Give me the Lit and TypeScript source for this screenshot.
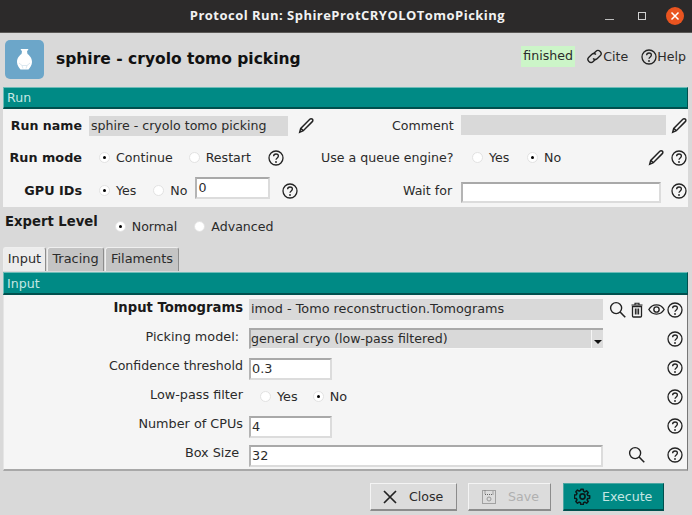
import { LitElement, html, css, svg } from "lit";
import { customElement } from "lit/decorators.js";

const ic = (w: number, body: unknown, vb = "0 0 16 16") =>
  html`<svg class="ic" width=${w} height=${w} viewBox=${vb} fill="none" stroke="#222" stroke-width="1.3">${body}</svg>`;

const help = () => ic(16, svg`<circle cx="8" cy="8" r="7"/><path d="M5.6 6.2C5.7 4.7 6.8 4 8 4c1.4 0 2.4.9 2.4 2.1 0 1.8-2.4 1.8-2.4 3.7"/><circle cx="8" cy="12" r=".9" fill="#222" stroke="none"/>`);
const pencil = () => ic(18, svg`<path d="M2.4 13.6l.9-3.5L11.4 2c.7-.7 1.6-.7 2.2-.1.7.7.6 1.6 0 2.2l-8 8.1z"/><path d="M3.3 10.1l2.4 2.1"/>`);
const search = () => ic(17, svg`<circle cx="6.7" cy="6.7" r="5.2"/><path d="M10.4 10.4l4.9 4.9" stroke-width="1.5"/>`);
const trash = () => ic(16, svg`<path d="M3.5 4.5h9V14a1 1 0 0 1-1 1h-7a1 1 0 0 1-1-1z"/><path d="M2.5 3h11M6 3V1.3h4V3M6.4 6.5v6M8 6.5v6M9.6 6.5v6" stroke-width="1.1"/>`);
const eye = () => ic(17, svg`<path d="M.8 8C2.6 5 5 3.7 8 3.7S13.4 5 15.2 8c-1.8 3-4.2 4.3-7.2 4.3S2.6 11 .8 8z"/><circle cx="8" cy="8" r="2.5"/>`);
const link = () => ic(17, svg`<path d="M7 5.4l2.2-2.2a3 3 0 0 1 4.1 0 3 3 0 0 1 0 4.2l-2.6 2.5a3 3 0 0 1-4.1 0"/><path d="M9 10.6l-2.2 2.2a3 3 0 0 1-4.1 0 3 3 0 0 1 0-4.2l2.6-2.5a3 3 0 0 1 4.1 0"/>`);
const gear = () => ic(17, svg`<circle cx="8" cy="8" r="2.4" stroke="#0a1a1a" stroke-width="1.6"/><path stroke="#0a1a1a" stroke-width="1.6" stroke-linejoin="round" d="M6.8 1.2h2.4l.4 2 1.3.6 1.8-1.1 1.6 1.7-1.1 1.7.6 1.3 2 .4v2.4l-2 .4-.6 1.3 1.1 1.7-1.6 1.7-1.8-1.1-1.3.6-.4 2H6.8l-.4-2-1.3-.6-1.8 1.1-1.6-1.7 1.1-1.7-.6-1.3-2-.4V7l2-.4.6-1.3-1.1-1.7 1.6-1.7 1.8 1.1 1.3-.6z" transform="translate(.2 .2) scale(.92)"/>`);
const close = () => ic(16, svg`<path d="M2 2l12 12M14 2L2 14" stroke-width="1.7"/>`);
const floppy = () => html`<svg class="ic" width="16" height="16" viewBox="0 0 16 16" fill="none" stroke="#666" stroke-width="1" stroke-dasharray="1 1"><path d="M1.5 1.5h13v13h-13z"/><path d="M4 1.5v4h8v-4" /><circle cx="8" cy="10" r="2" stroke-dasharray="none" stroke="#999"/></svg>`;
const radio = (on: boolean) => html`<span class="radio ${on ? "on" : ""}"></span>`;

@customElement("app-root")
export class AppRoot extends LitElement {
  static styles = css`
    :host { display: block; width: 692px; height: 515px; overflow: hidden; background: #d9d9d9; font-family: "DejaVu Sans", sans-serif; font-size: 12.6px; color: #2b2b2b; }
    * { box-sizing: border-box; }
    .ic { display: block; flex: none; }
    .titlebar { height: 33px; background: #2c2a2a; border-bottom: 1px solid #5a5856; display: flex; align-items: center; justify-content: center; position: relative; color: #f2f2f2; font: bold 13px "Open Sans", sans-serif; letter-spacing: .47px; padding: 0 0 2px 3px; }
    .winbtns { position: absolute; top: 0; right: 0; height: 32px; display: flex; align-items: center; }
    .min { width: 9px; height: 1.5px; background: #bdbdbd; margin: 7px 0 0 0; }
    .max { width: 8px; height: 8px; border: 1px solid #d0d0d0; margin: 0 0 0 24px; }
    .x { width: 18px; height: 18px; border-radius: 50%; background: #e95420; margin: 0 8px 0 20px; display: flex; align-items: center; justify-content: center; }

    .header { height: 54px; display: flex; align-items: center; padding: 0 6px 0 5px; }
    .logo { width: 39px; height: 39px; background: #6ca6c9; border-radius: 5px; display: flex; align-items: center; justify-content: center; margin-bottom: 2px; }
    .h-title { font-size: 15.5px; font-weight: bold; color: #111; margin-left: 12px; margin-bottom: 2px; }
    .h-right { margin-left: auto; display: flex; align-items: center; margin-bottom: 7px; }
    .finished { background: #ccf5c8; height: 21px; line-height: 20px; padding: 0 2px; margin-right: 11px; width: 54px; white-space: nowrap; }
    .h-link { display: flex; align-items: center; }
    .h-link + .h-link { margin-left: 13px; }

    .bar { background: #008a85; color: #c5e6e3; height: 22px; line-height: 20px; padding-left: 3px; border-top: 1px solid #6dbcb8; border-left: 1px solid #6dbcb8; border-bottom: 2px solid #00504e; border-right: 1px solid #00504e; }
    .bar.input { height: 23px; margin-top: 1px; line-height: 21px; }
    .section { margin: 0 4px 0 3px; }
    .run-panel { background: #f5f5f5; height: 98px; display: grid; grid-template-rows: 31px 33px 33px; padding-top: 1px; }
    .row { display: flex; align-items: center; position: relative; white-space: nowrap; }
    .lbl { width: 79px; text-align: right; font-weight: bold; font-size: 12.8px; color: #1a1a1a; margin-right: 7px; flex: none; }
    .lbl.small { font-size: 12.6px; }
    .opt { display: flex; align-items: center; }
    .radio { width: 11px; height: 11px; border-radius: 50%; background: #fff; border: 1px solid #e2e2e2; margin-right: 6px; position: relative; flex: none; }
    .radio.on::after { content: ""; position: absolute; left: 3px; top: 3px; width: 3px; height: 3px; border-radius: 50%; background: #000; }
    .ro { background: #d9d9d9; height: 20px; line-height: 19px; padding-left: 2px; }
    .inp { background: #fff; border: 2px solid #dcdcdc; border-top-color: #a9a9a9; border-left-color: #b4b4b4; line-height: 17px; padding-left: 1px; color: #2b2b2b; }
    .r2 { position: absolute; display: flex; align-items: center; height: 100%; top: 0; }

    .expert { height: 40px; display: flex; padding: 7px 0 0 5px; }
    .expert b { color: #1a1a1a; font-size: 13.2px; }
    .expert .opts { display: flex; align-items: center; height: 25px; }

    .tabs { display: flex; height: 24px; margin-left: 3px; gap: 1px; font-size: 12.9px; }
    .tab { background: #c4c4c4; border: 1px solid #efefef; border-right-color: #8d8d8d; border-bottom: none; border-radius: 3px 3px 0 0; line-height: 21px; text-align: center; height: 24px; }
    .tab.active { background: #ededed; }
    .input-panel { background: #f5f5f5; margin: 0 4px 0 3px; height: 176px; border-right: 1px solid #777; border-bottom: 2px solid #a8a8a8; border-left: 1px solid #e5e5e5; font-size: 12.8px; }
    .irow { height: 29px; display: flex; align-items: center; position: relative; white-space: nowrap; }
    .ilbl { width: 239px; text-align: right; flex: none; margin-right: 6px; }
    .ilbl.up { padding-bottom: 4px; }
    .ilbl b { color: #1a1a1a; font-size: 13.2px; }
    .ilbl.short { padding-right: 4px; }
    .ilbl.small { font-size: 12.6px; }
    .field { width: 354px; flex: none; }
    .num { width: 83px; height: 22px; margin-top: 2px; }
    .helpc { position: absolute; left: 663px; top: 7px; }
    .combo { height: 21px; background: #d9d9d9; border-top: 2px solid #a9a9a9; border-left: 2px solid #a9a9a9; border-bottom: 1px solid #f8f8f8; line-height: 17px; padding-left: 0; position: relative; font-size: 12.6px; }
    .arrow { position: absolute; right: 0; top: 0; bottom: 0; width: 12px; background: #dcdcdc; border-left: 1px solid #f5f5f5; }
    .arrow::before { content: ""; position: absolute; left: 2px; bottom: 4px; border-left: 4px solid transparent; border-right: 4px solid transparent; border-top: 4px solid #111; }
    .actions { display: flex; justify-content: flex-end; padding: 12px 28px 0 0; gap: 11px; }
    .btn { height: 28px; display: flex; align-items: center; background: #dcdcdc; border: 1px solid #f4f4f4; border-right-color: #8c8c8c; border-bottom: 2px solid #8c8c8c; }
    .btn.close { width: 87px; padding-left: 11px; }
    .btn.close span { margin-left: 11px; }
    .btn.save { width: 83px; padding-left: 12px; color: #b0b0b0; }
    .btn.save span { margin-left: 11px; }
    .btn.exec { width: 101px; padding-left: 10px; margin-left: 1px; background: #008a85; color: #c5e6e3; border-color: #4aa6a2; border-right-color: #00504e; border-bottom-color: #00504e; }
    .btn.exec span { margin-left: 11px; }
  `;

  render() {
    return html`
      <div class="titlebar">Protocol Run: SphireProtCRYOLOTomoPicking
        <div class="winbtns"><div class="min"></div><div class="max"></div>
          <div class="x"><svg width="10" height="10" viewBox="0 0 10 10" stroke="#fff" stroke-width="1.5"><path d="M1.5 1.5l7 7M8.5 1.5l-7 7"/></svg></div>
        </div>
      </div>
      <div class="header">
        <div class="logo"><svg width="15" height="21" viewBox="0 0 15 21"><path fill="#fff" d="M3.5 0h8L10 2.5l.5 2.5c2 1.5 4.500 4 4.500 8 0 3-2 5.500-3.500 7.500h-8C2 19 0 16 0 13c0-4 2.500-6.500 4.500-8L5 2.500z"/><path fill="none" stroke="#d3e2ec" stroke-width=".8" d="M2 14l3 2.500 5 0 3-2.500M5 16.500l1 3M10 16.500l-1 3"/></svg></div>
        <div class="h-title">sphire - cryolo tomo picking</div>
        <div class="h-right">
          <div class="finished">finished</div>
          <div class="h-link">${link()}Cite</div>
          <div class="h-link">${help()}Help</div>
        </div>
      </div>

      <div class="section">
        <div class="bar">Run</div>
        <div class="run-panel">
          <div class="row">
            <div class="lbl small">Run name</div>
            <div class="ro" style="width:199px">sphire - cryolo tomo picking</div>
            <div class="r2" style="left:294px">${pencil()}</div>
            <div class="r2" style="left:389px">Comment</div>
            <div class="ro r2" style="left:458px;width:205px;height:20px;top:5px"></div>
            <div class="r2" style="left:667px">${pencil()}</div>
          </div>
          <div class="row">
            <div class="lbl">Run mode</div>
            <div class="opt" style="margin-left:10px">${radio(true)}Continue</div>
            <div class="opt" style="margin-left:16px">${radio(false)}Restart</div>
            <div class="r2" style="left:265px">${help()}</div>
            <div class="r2" style="left:318px">Use a queue engine?</div>
            <div class="r2" style="left:469px">${radio(false)}Yes</div>
            <div class="r2" style="left:524px">${radio(true)}No</div>
            <div class="r2" style="left:644px">${pencil()}</div>
            <div class="r2" style="left:668px">${help()}</div>
          </div>
          <div class="row">
            <div class="lbl">GPU IDs</div>
            <div class="opt" style="margin-left:10px">${radio(true)}Yes</div>
            <div class="opt" style="margin-left:17px">${radio(false)}No</div>
            <div class="inp" style="width:75px;height:22px;margin:-5px 0 0 8px">0</div>
            <div class="r2" style="left:279px">${help()}</div>
            <div class="r2" style="left:400px">Wait for</div>
            <div class="inp r2" style="left:458px;width:200px;height:21px;top:8px"></div>
            <div class="r2" style="left:668px">${help()}</div>
          </div>
        </div>
      </div>

      <div class="expert">
        <b>Expert Level</b>
        <div class="opts">
          <div class="opt" style="margin-left:17px">${radio(true)}Normal</div>
          <div class="opt" style="margin-left:17px">${radio(false)}Advanced</div>
        </div>
      </div>

      <div class="tabs">
        <div class="tab active" style="width:43px">Input</div>
        <div class="tab" style="width:57px">Tracing</div>
        <div class="tab" style="width:74px">Filaments</div>
      </div>
      <div class="section"><div class="bar input">Input</div></div>
      <div class="input-panel">
        ${this.irows()}
      </div>
      <div class="actions">
        <div class="btn close">${close()}<span>Close</span></div>
        <div class="btn save">${floppy()}<span>Save</span></div>
        <div class="btn exec">${gear()}<span>Execute</span></div>
      </div>
    `;
  }

  irows() {
    const h = html`<div class="helpc">${help()}</div>`;
    return html`
      <div class="irow"><div class="ilbl up"><b>Input Tomograms</b></div>
        <div class="ro field" style="height:21px">imod - Tomo reconstruction.Tomograms</div>
        <div class="r2" style="left:605px">${search()}</div>
        <div class="r2" style="left:625px">${trash()}</div>
        <div class="r2" style="left:644px">${eye()}</div>
        ${h}
      </div>
      <div class="irow"><div class="ilbl up short">Picking model:</div>
        <div class="combo field">general cryo (low-pass filtered)<div class="arrow"></div></div>${h}
      </div>
      <div class="irow"><div class="ilbl up small">Confidence threshold</div><div class="inp num">0.3</div>${h}</div>
      <div class="irow"><div class="ilbl up">Low-pass filter</div>
        <div class="opt" style="margin-left:11px">${radio(false)}Yes</div>
        <div class="opt" style="margin-left:15px">${radio(true)}No</div>${h}
      </div>
      <div class="irow"><div class="ilbl up">Number of CPUs</div><div class="inp num">4</div>${h}</div>
      <div class="irow"><div class="ilbl up short">Box Size</div><div class="inp field" style="height:22px;margin-top:2px">32</div>
        <div class="r2" style="left:624px">${search()}</div>${h}
      </div>
    `;
  }
}
